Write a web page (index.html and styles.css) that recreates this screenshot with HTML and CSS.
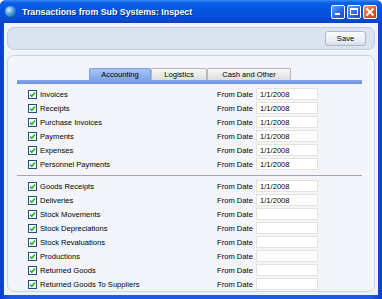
FILE: index.html
```html
<!DOCTYPE html>
<html lang="en">
<head>
    <meta charset="UTF-8">
    <title>Transactions from Sub Systems: Inspect</title>
    <link rel="stylesheet" href="styles.css">
</head>
<body>

<div class="window">
    <div class="titlebar">
        <span class="app-icon"></span>
        <span class="title">Transactions from Sub Systems: Inspect</span>
        <div class="win-buttons">
            <span class="win-btn min"><span class="min-bar"></span></span>
            <span class="win-btn max"><span class="max-box"></span></span>
            <span class="win-btn close">
                <svg width="10" height="10" viewBox="0 0 10 10"><path d="M1.5 1.5 L8.5 8.5 M8.5 1.5 L1.5 8.5" stroke="#fff" stroke-width="1.8"/></svg>
            </span>
        </div>
    </div>

    <div class="client">
        <div class="toolbar">
            <button class="save-button">Save</button>
        </div>

        <div class="panel">
            <div class="tabs">
                <span class="tab active">Accounting</span>
                <span class="tab">Logistics</span>
                <span class="tab">Cash and Other</span>
            </div>
            <div class="tab-bar"></div>

            <div class="group" id="grupaKsiegowa"></div>
            <div class="separator"></div>
            <div class="group" id="grupaLogistyka"></div>
        </div>
    </div>
</div>

<script>
    const ksiegowe = [
        ['Invoices', '1/1/2008'],
        ['Receipts', '1/1/2008'],
        ['Purchase Invoices', '1/1/2008'],
        ['Payments', '1/1/2008'],
        ['Expenses', '1/1/2008'],
        ['Personnel Payments', '1/1/2008']
    ];
    const logistyka = [
        ['Goods Receipts', '1/1/2008'],
        ['Deliveries', '1/1/2008'],
        ['Stock Movements', ''],
        ['Stock Depreciations', ''],
        ['Stock Revaluations', ''],
        ['Productions', ''],
        ['Returned Goods', ''],
        ['Returned Goods To Suppliers', '']
    ];

    const check = '<svg width="7" height="7" viewBox="0 0 7 7"><path d="M1 3.5 L2.8 5.3 L6 1.5" fill="none" stroke="#22b422" stroke-width="1.6"/></svg>';

    function zbudujGrupe(id, wiersze) {
        let html = '';
        wiersze.forEach(([nazwa, data]) => {
            html += `<div class="row">
                <span class="checkbox">${check}</span>
                <span class="label">${nazwa}</span>
                <span class="from">From Date</span>
                <span class="field">${data}</span>
            </div>`;
        });
        document.getElementById(id).innerHTML = html;
    }

    zbudujGrupe('grupaKsiegowa', ksiegowe);
    zbudujGrupe('grupaLogistyka', logistyka);
</script>
</body>
</html>
```

FILE: styles.css
```css
body {
    margin: 0;
    padding: 0;
    font-family: "Liberation Sans", Arial, sans-serif;
    font-size: 7.6px;
    color: #000;
}
.window {
    width: 382px;
    height: 299px;
    box-sizing: border-box;
    background: linear-gradient(to right, #0a3fd0, #1a5ae8 3%, #1a5ae8 97%, #0a3fd0);
    padding: 0 4px 4px 4px;
    display: flex;
    flex-direction: column;
    border-radius: 6px 6px 0 0;
}
.titlebar {
    height: 23px;
    margin: 0 -4px;
    padding: 0 4px;
    display: flex;
    align-items: center;
    background: linear-gradient(to bottom, #3b8af5 0%, #0a5fe8 12%, #0553df 50%, #0a4bd6 85%, #0a3fbf 100%);
    border-radius: 6px 6px 0 0;
}
.app-icon {
    width: 11px;
    height: 11px;
    border-radius: 50%;
    background: radial-gradient(circle at 35% 35%, #d8f0ff 0%, #5fb0e8 35%, #1f6aa8 75%, #124a80 100%);
    margin-left: 1px;
    margin-right: 6px;
}
.title {
    color: #fff;
    font-weight: bold;
    font-size: 8.8px;
    text-shadow: 1px 1px 0 #0a2a80;
    flex: 1;
}
.win-buttons {
    display: flex;
    gap: 2px;
    margin-right: 1px;
}
.win-btn {
    width: 14px;
    height: 14px;
    box-sizing: border-box;
    border: 1px solid #fff;
    border-radius: 2px;
    display: flex;
    align-items: center;
    justify-content: center;
    background: linear-gradient(to bottom right, #6a9cf8, #2a62e6 60%, #1a4cd0);
    position: relative;
}
.win-btn.close {
    background: linear-gradient(to bottom right, #f09a78, #e0532a 60%, #c83a14);
}
.min-bar {
    position: absolute;
    left: 3px;
    bottom: 3px;
    width: 5px;
    height: 2px;
    background: #fff;
}
.max-box {
    width: 8px;
    height: 7px;
    box-sizing: border-box;
    border: 1px solid #fff;
    border-top-width: 2px;
}
.client {
    flex: 1;
    background: #f1f3f9;
    padding: 4px 3px 3px 3px;
    display: flex;
    flex-direction: column;
    gap: 5px;
}
.toolbar {
    height: 23px;
    box-sizing: border-box;
    background: #dbe3f0;
    border: 1px solid #bfcbe0;
    border-radius: 7px;
    display: flex;
    align-items: center;
    justify-content: flex-end;
    padding-right: 8px;
}
.save-button {
    width: 41px;
    height: 15px;
    font-family: "Liberation Sans", Arial, sans-serif;
    font-size: 7.6px;
    padding: 0;
    background: linear-gradient(to bottom, #fbfcfe, #e8ecf4 70%, #d6dce8);
    border: 1px solid #aeb8cc;
    border-radius: 3px;
    color: #000;
}
.panel {
    flex: 1;
    background: #f3f5fb;
    border: 1px solid #c9d3e6;
    border-radius: 7px;
    padding: 12px 12px 0 9px;
}
.tabs {
    display: flex;
    height: 12px;
    padding-left: 72px;
}
.tab {
    box-sizing: border-box;
    height: 12px;
    display: flex;
    align-items: center;
    justify-content: center;
    background: linear-gradient(to bottom, #f6f6f6, #dedede);
    border: 1px solid #b8b8b8;
    border-bottom: none;
    border-radius: 2px 2px 0 0;
    width: 56px;
}
.tab:nth-child(3) {
    width: 84px;
}
.tab.active {
    width: 62px;
    background: linear-gradient(to bottom, #a8c4f4, #7fa4ea);
    border-color: #7fa0e0;
}
.tab-bar {
    height: 4px;
    background: linear-gradient(to bottom, #86a8ec, #6a92e2);
    margin-bottom: 3px;
}
.group {
    display: flex;
    flex-direction: column;
    padding-left: 11px;
}
.row {
    height: 14px;
    display: flex;
    align-items: center;
}
.checkbox {
    width: 9px;
    height: 9px;
    box-sizing: border-box;
    border: 1px solid #1f4f86;
    background: #fff;
    display: flex;
    align-items: center;
    justify-content: center;
    margin-right: 3px;
}
.label {
    flex: 1;
}
.from {
    width: 39px;
}
.field {
    width: 62px;
    height: 12px;
    box-sizing: border-box;
    background: #fff;
    border: 1px solid #e6e2d8;
    padding-left: 3px;
    display: flex;
    align-items: center;
    margin-right: 44px;
}
.separator {
    height: 1px;
    background: #a6a6a6;
    margin: 4px 0 3px 0;
}
```
